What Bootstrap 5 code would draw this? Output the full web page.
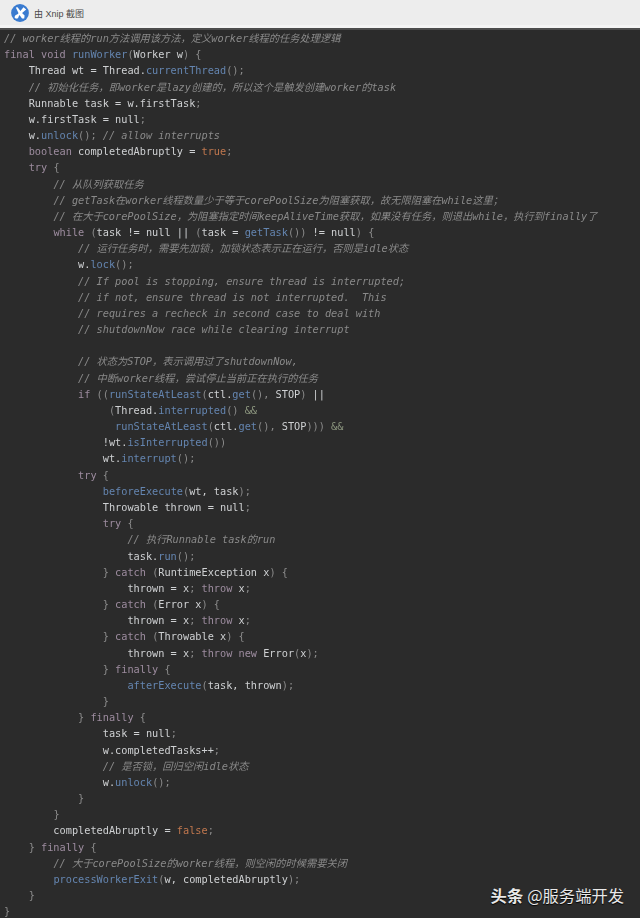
<!DOCTYPE html>
<html lang="zh">
<head>
<meta charset="utf-8">
<title>Xnip</title>
<link href="https://cdn.jsdelivr.net/npm/bootstrap@5.3.0/dist/css/bootstrap.min.css" rel="stylesheet">
<style>
html,body{height:918px;overflow:hidden;background:#2b2b2b}
.xnip-bar{height:30px;background:#ededed;border-bottom:2px solid #4d4d4d;box-shadow:inset 0 -3px 0 #f4f4f4;padding-left:11px;padding-bottom:2px;gap:5px;font:9px "Liberation Sans","Noto Sans CJK SC",sans-serif;color:#4a4a4a}
.xnip-bar svg{filter:blur(.35px)}
.code-wrap{position:relative;height:888px;background:#2b2b2b;overflow:hidden}
.code-body{margin:0;padding:0 0 0 4px;font:10.25px/16.17px "DejaVu Sans Mono","Noto Sans CJK SC",monospace;color:#cfd1d3;overflow:hidden;filter:blur(.4px)}
.c{color:#8a8a8a;font-style:italic}
.k{color:#9d8c9f}
.m{color:#6485b0}
.l{color:#c0774e}
.p{color:#8b8b8b}
.o{color:#8e9880}
.mark-wm{position:absolute;right:16px;bottom:15px;font:16.3px/1 "Noto Sans CJK SC",sans-serif;color:#e8e8e8;text-shadow:0 1px 1px #000;gap:4px}
.mark-wm b{font-weight:700}
.mark-wm span{font-weight:400}
</style>
</head>
<body>
<div class="xnip-bar d-flex align-items-center">
<svg width="18" height="18" viewBox="0 0 18 18"><circle cx="9" cy="9" r="8.9" fill="#3a7bd0"/><path d="M4.8 3.6 L6.6 3.2 L10.5 8.5 L13.6 11.6 L13.2 14.4 L11 14.4 L8.2 10.5 Z" fill="#fff"/><path d="M12.5 3.2 L15.2 5.6 L10.5 9.6 L8 11.8 L7 14.2 L4.9 14.8 L3.4 13.2 L4.4 11.2 L6.9 10 Z" fill="#fff"/></svg>
<span>由 Xnip 截图</span>
</div>
<div class="code-wrap">
<pre class="code-body"><span class="c">// worker线程的run方法调用该方法，定义worker线程的任务处理逻辑</span>
<span class="k">final void</span> <span class="m">runWorker</span><span class="p">(</span>Worker w<span class="p">) {</span>
    Thread wt = Thread.<span class="m">currentThread</span><span class="p">();</span>
    <span class="c">// 初始化任务，即worker是lazy创建的，所以这个是触发创建worker的task</span>
    Runnable task = w.firstTask<span class="p">;</span>
    w.firstTask = null<span class="p">;</span>
    w.<span class="m">unlock</span><span class="p">();</span> <span class="c">// allow interrupts</span>
    <span class="k">boolean</span> completedAbruptly = <span class="l">true</span><span class="p">;</span>
    <span class="k">try</span> <span class="p">{</span>
        <span class="c">// 从队列获取任务</span>
        <span class="c">// getTask在worker线程数量少于等于corePoolSize为阻塞获取，故无限阻塞在while这里；</span>
        <span class="c">// 在大于corePoolSize，为阻塞指定时间keepAliveTime获取，如果没有任务，则退出while，执行到finally了</span>
        <span class="k">while</span> <span class="p">(</span>task != null || <span class="p">(</span>task = <span class="m">getTask</span><span class="p">())</span> != null<span class="p">) {</span>
            <span class="c">// 运行任务时，需要先加锁，加锁状态表示正在运行，否则是idle状态</span>
            w.<span class="m">lock</span><span class="p">();</span>
            <span class="c">// If pool is stopping, ensure thread is interrupted;</span>
            <span class="c">// if not, ensure thread is not interrupted.  This</span>
            <span class="c">// requires a recheck in second case to deal with</span>
            <span class="c">// shutdownNow race while clearing interrupt</span>

            <span class="c">// 状态为STOP，表示调用过了shutdownNow,</span>
            <span class="c">// 中断worker线程，尝试停止当前正在执行的任务</span>
            <span class="k">if</span> <span class="p">((</span><span class="m">runStateAtLeast</span><span class="p">(</span>ctl.<span class="m">get</span><span class="p">(),</span> STOP<span class="p">)</span> ||
                 <span class="p">(</span>Thread.<span class="m">interrupted</span><span class="p">()</span> <span class="o">&amp;&amp;</span>
                  <span class="m">runStateAtLeast</span><span class="p">(</span>ctl.<span class="m">get</span><span class="p">(),</span> STOP<span class="p">)))</span> <span class="o">&amp;&amp;</span>
                !wt.<span class="m">isInterrupted</span><span class="p">())</span>
                wt.<span class="m">interrupt</span><span class="p">();</span>
            <span class="k">try</span> <span class="p">{</span>
                <span class="m">beforeExecute</span><span class="p">(</span>wt, task<span class="p">);</span>
                Throwable thrown = null<span class="p">;</span>
                <span class="k">try</span> <span class="p">{</span>
                    <span class="c">// 执行Runnable task的run</span>
                    task.<span class="m">run</span><span class="p">();</span>
                <span class="p">}</span> <span class="k">catch</span> <span class="p">(</span>RuntimeException x<span class="p">) {</span>
                    thrown = x<span class="p">;</span> <span class="k">throw</span> x<span class="p">;</span>
                <span class="p">}</span> <span class="k">catch</span> <span class="p">(</span>Error x<span class="p">) {</span>
                    thrown = x<span class="p">;</span> <span class="k">throw</span> x<span class="p">;</span>
                <span class="p">}</span> <span class="k">catch</span> <span class="p">(</span>Throwable x<span class="p">) {</span>
                    thrown = x<span class="p">;</span> <span class="k">throw new</span> Error<span class="p">(</span>x<span class="p">);</span>
                <span class="p">}</span> <span class="k">finally</span> <span class="p">{</span>
                    <span class="m">afterExecute</span><span class="p">(</span>task, thrown<span class="p">);</span>
                <span class="p">}</span>
            <span class="p">}</span> <span class="k">finally</span> <span class="p">{</span>
                task = null<span class="p">;</span>
                w.completedTasks++<span class="p">;</span>
                <span class="c">// 是否锁，回归空闲idle状态</span>
                w.<span class="m">unlock</span><span class="p">();</span>
            <span class="p">}</span>
        <span class="p">}</span>
        completedAbruptly = <span class="l">false</span><span class="p">;</span>
    <span class="p">}</span> <span class="k">finally</span> <span class="p">{</span>
        <span class="c">// 大于corePoolSize的worker线程，则空闲的时候需要关闭</span>
        <span class="m">processWorkerExit</span><span class="p">(</span>w, completedAbruptly<span class="p">);</span>
    <span class="p">}</span>
<span class="p">}</span></pre>
<div class="mark-wm d-flex"><b>头条</b><span>@服务端开发</span></div>
</div>
</body>
</html>
